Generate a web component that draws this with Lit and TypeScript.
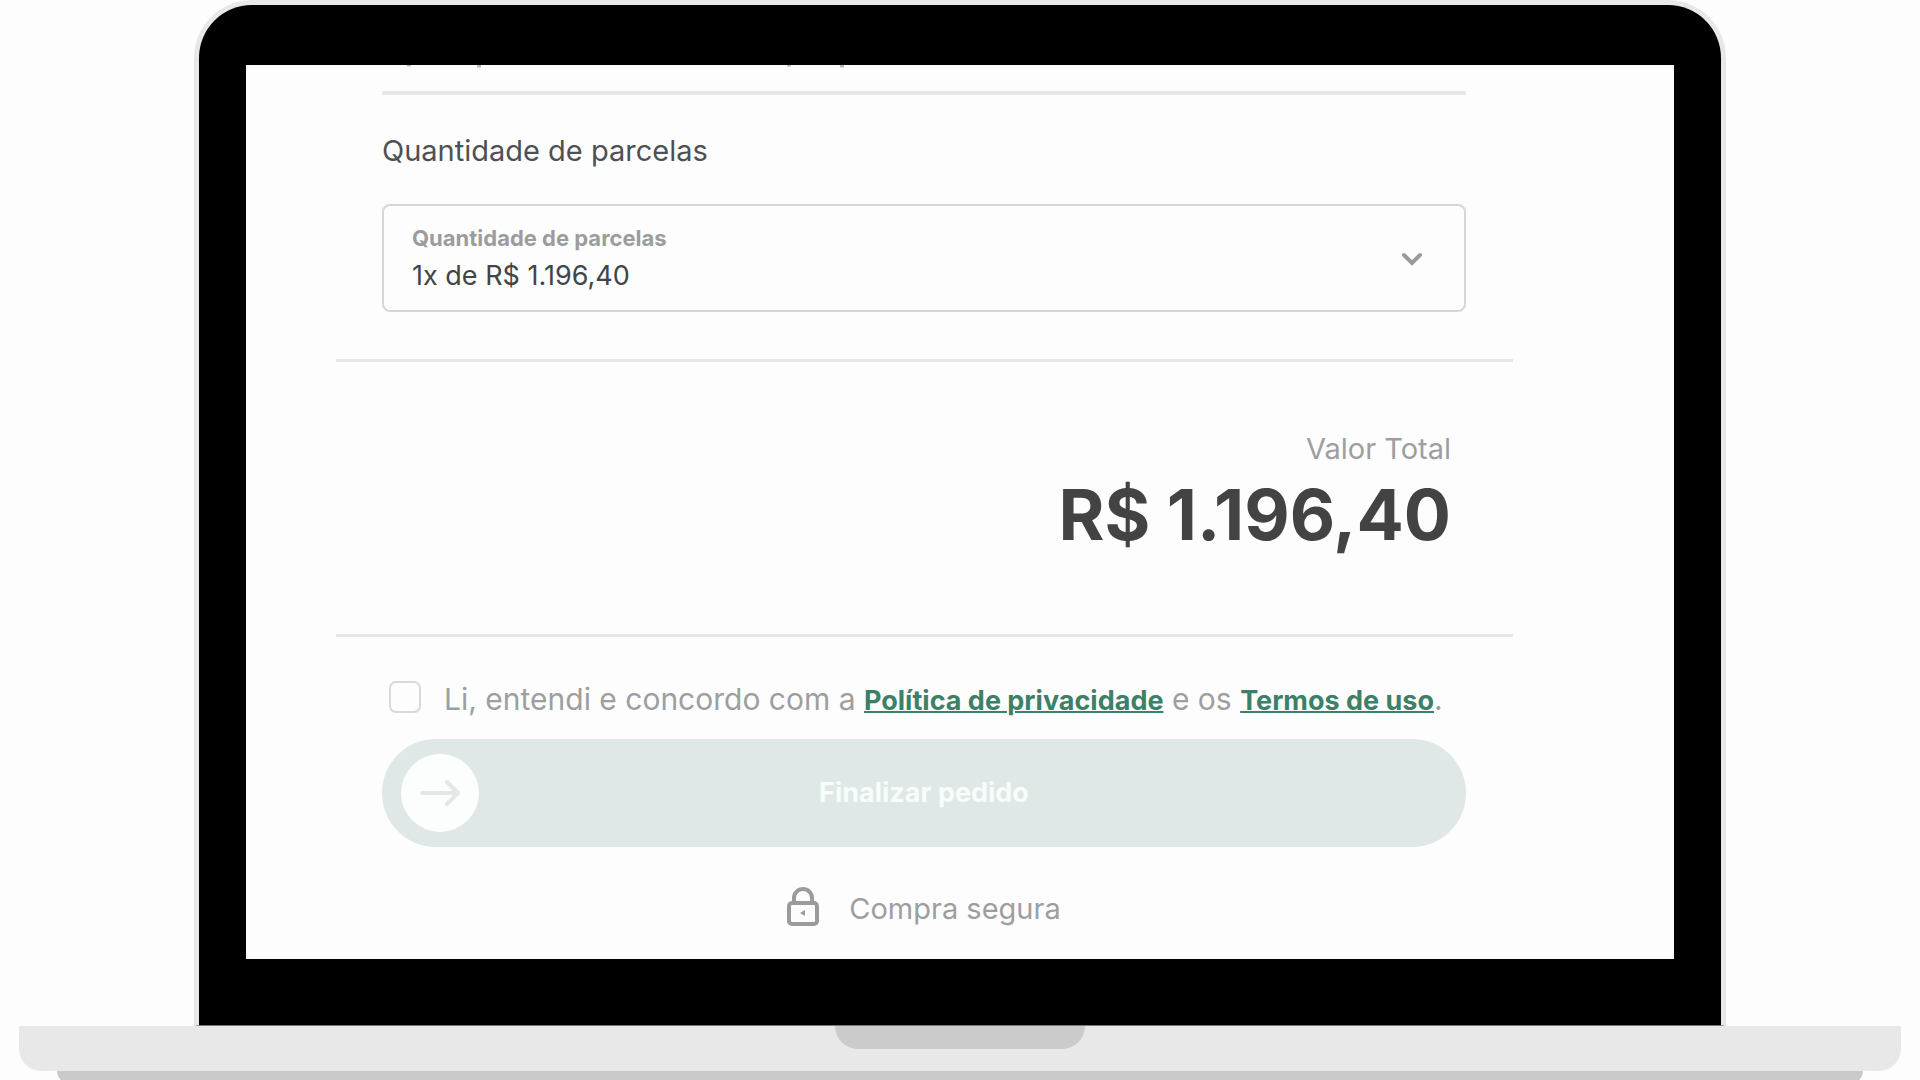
import { LitElement, html, css } from "lit";
import { customElement, state } from "lit/decorators.js";

@customElement("installment-select")
class InstallmentSelect extends LitElement {
  static styles = css`
    :host {
      display: block;
    }
    .box {
      display: flex;
      align-items: center;
      padding: 19px 40px 18px 28px;
      border: 2px solid #d6d6d6;
      border-radius: 8px;
    }
    .field {
      flex: 1;
      display: flex;
      flex-direction: column;
      gap: 9px;
    }
    .label {
      font-size: 22px;
      font-weight: 700;
      line-height: 26px;
      color: #9b9d9d;
    }
    .value {
      appearance: none;
      width: 100%;
      height: 32px;
      margin: 0;
      padding: 0;
      border: 0;
      background: transparent;
      font: inherit;
      font-size: 27px;
      line-height: 32px;
      color: #404548;
    }
    .chevron {
      width: 24px;
      height: 24px;
    }
  `;

  render() {
    return html`
      <div class="box">
        <div class="field">
          <label class="label" for="installments">Quantidade de parcelas</label>
          <select class="value" id="installments">
            <option>1x de R$ 1.196,40</option>
          </select>
        </div>
        <svg class="chevron" viewBox="0 0 24 24" fill="none" stroke="#9a9a9a" stroke-width="4" stroke-linecap="round" aria-hidden="true">
          <path d="M4 8l8 8 8-8" />
        </svg>
      </div>
    `;
  }
}

@customElement("checkout-form")
class CheckoutForm extends LitElement {
  @state() private accepted = false;

  static styles = css`
    :host {
      display: block;
      padding: 0 161px 32px 90px;
      background: #fdfdfd;
      color: #9d9f9f;
      font-size: 29px;
      line-height: 36px;
    }
    .section {
      padding: 0 47px 0 46px;
    }
    .clipped {
      display: block;
      width: 100%;
      height: 26px;
    }
    .rule {
      height: 4px;
      margin: 0;
      border: 0;
      background: #e7e7e7;
    }
    .rule.wide {
      height: 3px;
    }
    .title {
      margin: 38px 0 35px;
      font-size: 29px;
      font-weight: 400;
      color: #4d5154;
    }
    .installments {
      padding-bottom: 47px;
    }
    .total {
      padding: 69px 62px 77px 0;
      text-align: right;
    }
    .caption,
    .amount {
      margin: 0;
    }
    .amount {
      margin-top: 6px;
      font-size: 70px;
      font-weight: 700;
      line-height: 84px;
      color: #434343;
    }
    .consent {
      display: flex;
      align-items: flex-start;
      gap: 23px;
      margin: 44px 0 20px;
      padding-left: 7px;
      font-size: 30px;
    }
    .check {
      appearance: none;
      flex: none;
      width: 32px;
      height: 32px;
      margin: 0;
      border: 2px solid #d9d9d9;
      border-radius: 7px;
      background: #fdfdfd;
    }
    .check:checked {
      background: #3d8068;
    }
    .link {
      font-size: 27px;
      font-weight: 700;
      color: #3d8068;
      text-decoration-thickness: 2px;
    }
    .submit {
      display: grid;
      grid-template-columns: 78px 1fr 78px;
      align-items: center;
      width: 100%;
      height: 108px;
      padding: 0 19px;
      border: 0;
      border-radius: 54px;
      background: #dfe8e6;
      font: inherit;
      font-size: 27px;
      font-weight: 700;
      color: #f8fcfb;
    }
    .knob {
      display: grid;
      place-items: center;
      height: 78px;
      border-radius: 50%;
      background: #fcfefe;
    }
    .arrow {
      width: 40px;
      height: 28px;
    }
    .secure {
      display: flex;
      justify-content: center;
      align-items: flex-end;
      gap: 30px;
      margin: 44px 0 0;
    }
    .lock {
      width: 32px;
      height: 40px;
      margin-top: -4px;
    }
  `;

  render() {
    return html`
      <div class="section installments">
        <svg class="clipped" fill="none" stroke="#b9b9b9" stroke-width="3" aria-hidden="true">
          <path d="M25 0h4M95 1h4M405 0h4M458 1h4" />
        </svg>
        <hr class="rule" />
        <h2 class="title">Quantidade de parcelas</h2>
        <installment-select></installment-select>
      </div>
      <hr class="rule wide" />
      <div class="total">
        <p class="caption">Valor Total</p>
        <p class="amount">R$ 1.196,40</p>
      </div>
      <hr class="rule wide" />
      <div class="section">
        <div class="consent">
          <input
            class="check"
            id="consent"
            type="checkbox"
            .checked=${this.accepted}
            @change=${(e: Event) => (this.accepted = (e.target as HTMLInputElement).checked)}
          />
          <label for="consent"
            >Li, entendi e concordo com a <a class="link" href="#privacidade">Política de privacidade</a> e os
            <a class="link" href="#termos">Termos de uso</a>.</label
          >
        </div>
        <button class="submit" type="button" ?disabled=${!this.accepted}>
          <span class="knob">
            <svg class="arrow" viewBox="0 0 40 28" fill="none" stroke="#e3e8e7" stroke-width="4" stroke-linecap="round" stroke-linejoin="round" aria-hidden="true">
              <path d="M2 14h35M27 3l11 11-11 11" />
            </svg>
          </span>
          <span>Finalizar pedido</span>
        </button>
        <p class="secure">
          <svg class="lock" viewBox="0 0 32 40" fill="none" stroke="#9b9b9b" stroke-width="4" aria-hidden="true">
            <rect x="2" y="16" width="28" height="21" rx="3" />
            <path d="M7 16v-5a9 9 0 0 1 18 0v5" />
            <path d="M13 26l5-3v6z" fill="#9b9b9b" stroke="none" />
          </svg>
          <span>Compra segura</span>
        </p>
      </div>
    `;
  }
}

@customElement("app-root")
class AppRoot extends LitElement {
  static styles = css`
    :host {
      display: block;
      box-sizing: border-box;
      height: 100vh;
      overflow: hidden;
      background: #fdfdfd;
      font-family: Inter, "Liberation Sans", sans-serif;
    }
    .lid {
      margin: 0 194px;
      padding: 60px 47px 66px;
      border: 5px solid #e8e8e8;
      border-bottom: 1px solid #777;
      border-radius: 58px 58px 0 0;
      background: #000;
    }
    .screen {
      overflow: hidden;
    }
    .base {
      display: flex;
      justify-content: center;
      height: 45px;
      margin: 0 19px;
      border-radius: 0 0 22px 22px;
      background: #e8e8e8;
    }
    .notch {
      width: 250px;
      height: 23px;
      border-radius: 0 0 23px 23px;
      background: #cbcbcb;
    }
    .foot {
      height: 12px;
      margin: 0 57px;
      border-radius: 0 0 12px 12px;
      background: #cacaca;
    }
  `;

  render() {
    return html`
      <div class="lid">
        <div class="screen"><checkout-form></checkout-form></div>
      </div>
      <div class="base"><div class="notch"></div></div>
      <div class="foot"></div>
    `;
  }
}
